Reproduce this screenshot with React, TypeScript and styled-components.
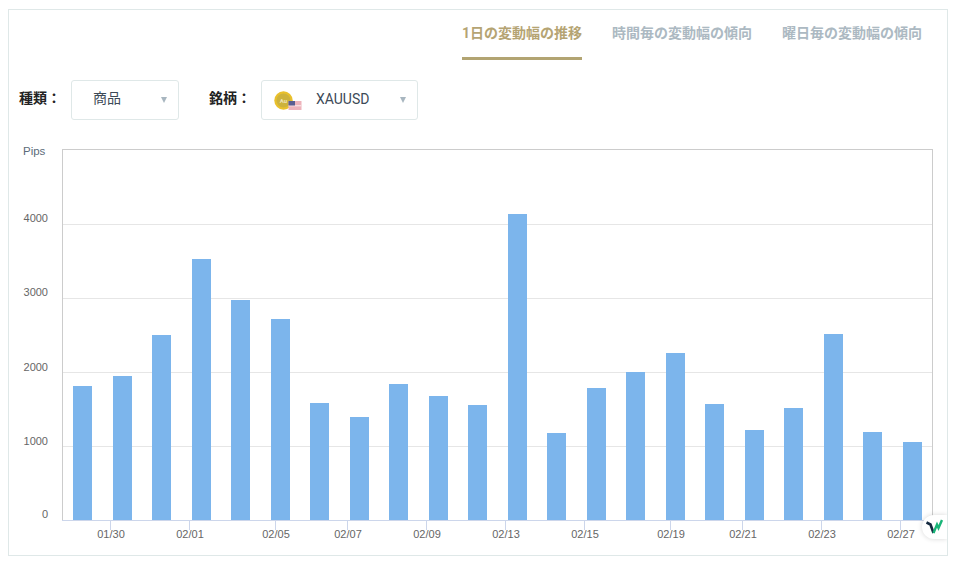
import React from 'react';
import styled, { createGlobalStyle } from 'styled-components';

const GlobalStyle = createGlobalStyle`
  html, body {
    margin: 0;
    background: #fff;
  }
  body {
    font-family: Roboto, "Noto Sans CJK JP", sans-serif;
  }
`;

const Page = styled.div`
  padding: 9px 11px 8px 8px;
`;

const Panel = styled.section`
  position: relative;
  box-sizing: border-box;
  height: 547px;
  border: 1px solid #dfe8e8;
  overflow: hidden;
`;

const Tabs = styled.nav`
  display: flex;
  justify-content: flex-end;
  gap: 30px;
  padding-right: 25px;
  height: 50px;
`;

const Tab = styled.div<{ $active?: boolean }>`
  box-sizing: border-box;
  height: 50px;
  padding-top: 13px;
  font-size: 14px;
  line-height: 20px;
  font-weight: 700;
  white-space: nowrap;
  color: ${(p) => (p.$active ? '#b5a473' : '#acb9c2')};
  border-bottom: 3px solid ${(p) => (p.$active ? '#b2a472' : 'transparent')};
`;

const Filters = styled.div`
  display: flex;
  align-items: center;
  margin-top: 20px;
  padding-left: 10px;
`;

const FilterLabel = styled.label`
  font-size: 14px;
  line-height: 20px;
  padding-bottom: 4px;
  font-weight: 700;
  color: #222;
  white-space: nowrap;
  width: 52px;
`;

const Select = styled.div<{ $width: number; $gap?: number }>`
  box-sizing: border-box;
  position: relative;
  display: flex;
  align-items: center;
  width: ${(p) => p.$width}px;
  height: 40px;
  margin-right: ${(p) => p.$gap ?? 0}px;
  border: 1px solid #dfe8e8;
  border-radius: 3px;
  font-size: 14px;
  color: #3d4a57;
`;

const SelectText = styled.span<{ $left: number; $lift: number }>`
  margin-left: ${(p) => p.$left}px;
  padding-bottom: ${(p) => p.$lift}px;
  line-height: 20px;
`;

const Caret = styled.i`
  margin-left: auto;
  margin-right: 11px;
  width: 0;
  height: 0;
  border-left: 3.5px solid transparent;
  border-right: 3.5px solid transparent;
  border-top: 6px solid #a8b6c0;
`;

const CoinIcon = styled.svg`
  flex: none;
  margin-left: 12px;
  margin-top: 2px;
`;

const ChartWrap = styled.div`
  margin-top: 10px;
`;

const ChartSvg = styled.svg`
  display: block;
`;

const Widget = styled.div`
  position: absolute;
  right: 0;
  bottom: 16px;
  display: flex;
  align-items: center;
  justify-content: center;
  width: 24px;
  height: 24px;
  padding-right: 1px;
  background: #fff;
  border-radius: 12px 0 0 12px;
  box-shadow: 0 0 5px rgba(0, 0, 0, 0.16);
`;

const tabs = ['1日の変動幅の推移', '時間毎の変動幅の傾向', '曜日毎の変動幅の傾向'];

const tops = [386, 376, 335, 259, 300, 319, 403, 417, 384, 396, 405, 214, 433, 388, 372, 353, 404, 430, 408, 334, 432, 442];
const grid = [224, 298, 372, 446];
const yLabels = [
  { t: '4000', y: 222 },
  { t: '3000', y: 296 },
  { t: '2000', y: 371 },
  { t: '1000', y: 445 },
  { t: '0', y: 518 },
];
const xLabels = [
  { t: '01/30', x: 110.5 },
  { t: '02/01', x: 189.5 },
  { t: '02/05', x: 275.5 },
  { t: '02/07', x: 347.5 },
  { t: '02/09', x: 426.5 },
  { t: '02/13', x: 505.5 },
  { t: '02/15', x: 584.5 },
  { t: '02/19', x: 670.5 },
  { t: '02/21', x: 742.5 },
  { t: '02/23', x: 821.5 },
  { t: '02/27', x: 900.5 },
];

// page coordinates minus the chart's origin
const ox = 9;
const oy = 130;

const Chart = () => (
  <ChartSvg width={938} height={415} viewBox={`${ox} ${oy} 938 415`} fontFamily="'Liberation Sans', Arial, sans-serif">
    <rect x={62.5} y={149.5} width={870} height={371} fill="#fff" stroke="#cccccc" />
    {grid.map((y) => (
      <line key={y} x1={63} x2={932} y1={y + 0.5} y2={y + 0.5} stroke="#e6e6e6" />
    ))}
    {tops.map((top, i) => (
      <rect key={i} x={73 + Math.round(i * 39.52)} y={top} width={19} height={520 - top} fill="#7cb5ec" />
    ))}
    <line x1={62} x2={932} y1={520.5} y2={520.5} stroke="#ccd6eb" />
    {xLabels.map((l) => (
      <g key={l.t}>
        <line x1={l.x} x2={l.x} y1={521} y2={530} stroke="#ccd6eb" />
        <text x={l.x + 0.5} y={538} textAnchor="middle" fontSize={11} fill="#666">
          {l.t}
        </text>
      </g>
    ))}
    {yLabels.map((l) => (
      <text key={l.t} x={48} y={l.y} textAnchor="end" fontSize={11} fill="#666">
        {l.t}
      </text>
    ))}
    <text x={23} y={154.5} fontSize={11.5} fill="#5c6b7a">
      Pips
    </text>
  </ChartSvg>
);

const Coin = () => (
  <CoinIcon width={28} height={20} viewBox="0 0 28 20">
    <circle cx={9.5} cy={9.5} r={9.2} fill="#e9c02c" />
    <circle cx={9.5} cy={9.5} r={7} fill="#cdb23c" />
    <text x={9.5} y={11.5} textAnchor="middle" fontSize={6} fontWeight={700} fill="#eee3b8" fontFamily="Roboto, sans-serif">
      Au
    </text>
    <rect x={14.5} y={10} width={13} height={9} fill="#eeb3bb" />
    <rect x={14.5} y={14} width={13} height={1.4} fill="#f7dde0" />
    <rect x={14.5} y={10} width={6.5} height={4.5} fill="#5a5f92" />
  </CoinIcon>
);

export default function App() {
  return (
    <Page>
      <GlobalStyle />
      <Panel>
        <Tabs>
          {tabs.map((t, i) => (
            <Tab key={t} $active={i === 0}>
              {t}
            </Tab>
          ))}
        </Tabs>
        <Filters>
          <FilterLabel>種類：</FilterLabel>
          <Select $width={108} $gap={30}>
            <SelectText $left={21} $lift={4}>商品</SelectText>
            <Caret />
          </Select>
          <FilterLabel>銘柄：</FilterLabel>
          <Select $width={157}>
            <Coin />
            <SelectText $left={14} $lift={2}>XAUUSD</SelectText>
            <Caret />
          </Select>
        </Filters>
        <ChartWrap>
          <Chart />
        </ChartWrap>
        <Widget>
          <svg width={17} height={16} viewBox="0 0 17 16">
            <path d="M0.5 3.5 L4.5 5.5 L7.5 14" fill="none" stroke="#14293f" strokeWidth={2.6} />
            <path d="M7.5 14 L11 5.5 L12.5 9 L16 1" fill="none" stroke="#19b578" strokeWidth={2.4} />
          </svg>
        </Widget>
      </Panel>
    </Page>
  );
}
